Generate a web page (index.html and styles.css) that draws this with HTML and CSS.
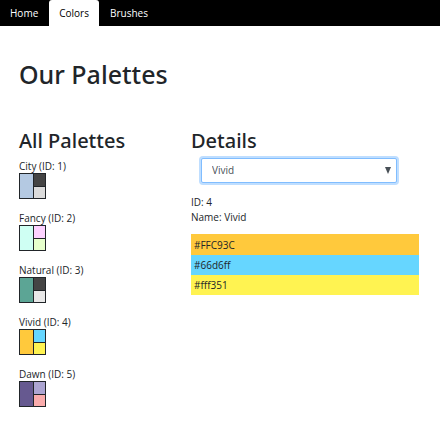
FILE: index.html
```html
<!DOCTYPE html>
<html lang="en">
<head>
<meta charset="utf-8">
<meta name="viewport" content="width=device-width, initial-scale=1">
<title>Our Palettes</title>
<link rel="stylesheet" href="styles.css">
</head>
<body>
<nav class="nav">
  <a class="nav-link" href="#home">Home</a>
  <a class="nav-link active" href="#colors">Colors</a>
  <a class="nav-link" href="#brushes">Brushes</a>
</nav>
<main class="page">
  <h1>Our Palettes</h1>
  <div class="columns">
    <section>
      <h2>All Palettes</h2>
      <ul class="palettes">
        <li>City (ID: 1)<div class="swatch city"><i></i><i></i><i></i></div></li>
        <li>Fancy (ID: 2)<div class="swatch fancy"><i></i><i></i><i></i></div></li>
        <li>Natural (ID: 3)<div class="swatch natural"><i></i><i></i><i></i></div></li>
        <li>Vivid (ID: 4)<div class="swatch vivid"><i></i><i></i><i></i></div></li>
        <li>Dawn (ID: 5)<div class="swatch dawn"><i></i><i></i><i></i></div></li>
      </ul>
    </section>
    <section>
      <h2 id="details">Details</h2>
      <div class="picker">
        <select class="select" aria-labelledby="details">
          <option>City</option>
          <option>Fancy</option>
          <option>Natural</option>
          <option selected>Vivid</option>
          <option>Dawn</option>
        </select>
        <svg class="arrow" viewBox="0 0 6 7" aria-hidden="true"><path d="M0 0h6L3 7z"/></svg>
      </div>
      <p class="info">ID: 4<br>Name: Vivid</p>
      <ul class="colors">
        <li class="orange">#FFC93C</li>
        <li class="blue">#66d6ff</li>
        <li class="yellow">#fff351</li>
      </ul>
    </section>
  </div>
</main>
</body>
</html>
```
FILE: styles.css
```css
* {
  box-sizing: border-box;
}

body {
  margin: 0;
  background: #fff;
  color: #212529;
  font: 10px/15px "Open Sans", "Noto Sans", sans-serif;
}

h1,
h2 {
  margin: 0;
  font-family: "Noto Sans", "Open Sans", sans-serif;
  font-weight: 500;
}

h1 {
  font-size: 25px;
  line-height: 32px;
}

h2 {
  font-size: 20px;
  line-height: 26px;
}

ul {
  margin: 0;
  padding: 0;
  list-style: none;
}

.nav {
  display: flex;
  gap: 1px;
  height: 26px;
  background: #000;
}

.nav-link {
  padding: 6px 10px 5px;
  border-radius: 3px 3px 0 0;
  color: #fff;
  text-decoration: none;
}

.nav-link.active {
  background: #fff;
  color: #000;
}

.page {
  padding: 32px 21px 20px 19px;
}

.columns {
  display: grid;
  grid-template-columns: 43fr 57fr;
  margin-top: 38px;
}

.palettes {
  display: grid;
  gap: 13px;
  margin-top: 6px;
  line-height: 13px;
}

.swatch {
  display: grid;
  grid-template-columns: 13px 11px;
  grid-template-rows: 12px 11px;
  gap: 1px;
  width: 27px;
  height: 26px;
  border: 1px solid #212529;
  background: #212529;
}

.swatch i:first-child {
  grid-row: span 2;
}

.city i:nth-child(1) { background: #b4c9e2; }
.city i:nth-child(2) { background: #444; }
.city i:nth-child(3) { background: #dbdbdb; }
.fancy i:nth-child(1) { background: #cffff3; }
.fancy i:nth-child(2) { background: #fdd2ff; }
.fancy i:nth-child(3) { background: #e6ffcc; }
.natural i:nth-child(1) { background: #5ca595; }
.natural i:nth-child(2) { background: #444; }
.natural i:nth-child(3) { background: #e8e8e8; }
.vivid i:nth-child(1) { background: #ffc93c; }
.vivid i:nth-child(2) { background: #66d6ff; }
.vivid i:nth-child(3) { background: #fff351; }
.dawn i:nth-child(1) { background: #665990; }
.dawn i:nth-child(2) { background: #aca5d2; }
.dawn i:nth-child(3) { background: #faacac; }

.picker {
  position: relative;
  margin: 4px 22px 0 10px;
}

.select {
  display: block;
  width: 100%;
  height: 25px;
  padding: 0 10px;
  border: 1px solid #80bdff;
  border-radius: 2px;
  outline: 0;
  box-shadow: 0 0 0 2px #bfdeff;
  appearance: none;
  background: #fff;
  color: #495057;
  font: inherit;
}

.arrow {
  position: absolute;
  top: 9px;
  right: 6px;
  width: 6px;
  height: 7px;
  fill: #495057;
  pointer-events: none;
}

.info {
  margin: 12px 0 9px;
}

.colors li {
  padding: 3px 3px 2px;
}

.colors .orange {
  padding-top: 4px;
  background: #ffc93c;
}

.colors .blue {
  background: #66d6ff;
}

.colors .yellow {
  background: #fff351;
}
```
